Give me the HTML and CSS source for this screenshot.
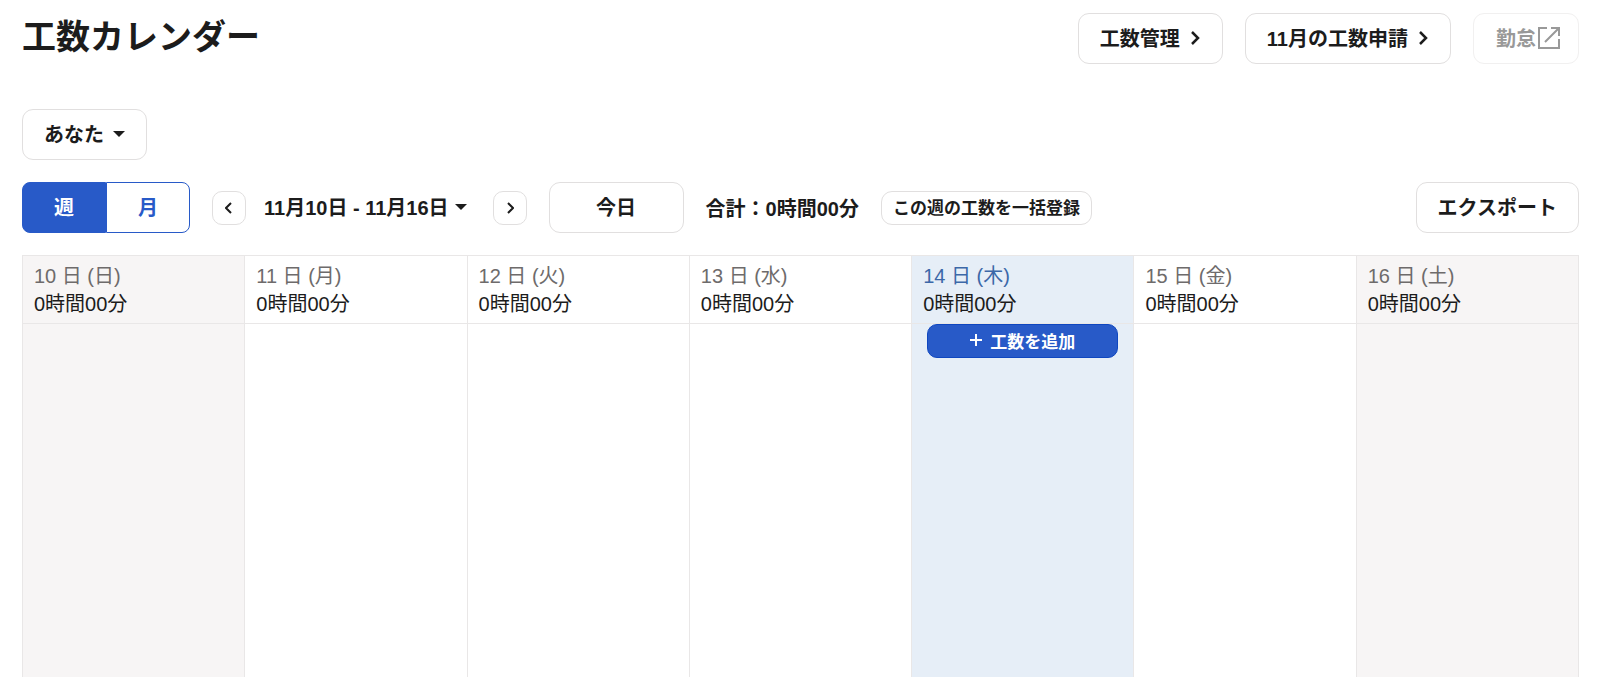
FILE: index.html
```html
<!DOCTYPE html>
<html lang="ja">
<head>
<meta charset="utf-8">
<meta name="viewport" content="width=device-width, initial-scale=1">
<title>工数カレンダー</title>
<link rel="stylesheet" href="styles.css">
</head>
<body>
<header class="page-header">
  <h1 class="title">工数カレンダー</h1>
  <nav class="header-actions">
    <button class="btn" type="button">工数管理<svg class="chevron" viewBox="0 0 10 16" aria-hidden="true"><path d="M1 2l6 6-6 6"/></svg></button>
    <button class="btn" type="button">11月の工数申請<svg class="chevron" viewBox="0 0 10 16" aria-hidden="true"><path d="M1 2l6 6-6 6"/></svg></button>
    <button class="btn btn-external" type="button" disabled>勤怠<svg class="external" viewBox="0 0 22 22" aria-hidden="true"><path d="M9 1H1v20h20v-9M13 1h8v8M21 1L7 15"/></svg></button>
  </nav>
</header>
<main class="content">
  <div class="filter">
    <button class="btn" type="button">あなた<svg class="caret" viewBox="0 0 12 6" aria-hidden="true"><path d="M0 0h12L6 6z"/></svg></button>
  </div>
  <div class="toolbar">
    <div class="toggle" role="group" aria-label="表示単位">
      <button class="toggle-item is-active" type="button" aria-pressed="true">週</button>
      <button class="toggle-item" type="button" aria-pressed="false">月</button>
    </div>
    <div class="range">
      <button class="btn-icon" type="button" aria-label="前の週"><svg class="arrow" viewBox="0 0 8 12" aria-hidden="true"><path d="M6 1L1 6l5 5"/></svg></button>
      <button class="range-label" type="button">11月10日 - 11月16日<svg class="caret" viewBox="0 0 12 6" aria-hidden="true"><path d="M0 0h12L6 6z"/></svg></button>
      <button class="btn-icon" type="button" aria-label="次の週"><svg class="arrow" viewBox="0 0 8 12" aria-hidden="true"><path d="M2 1l5 5-5 5"/></svg></button>
    </div>
    <button class="btn btn-today" type="button">今日</button>
    <p class="total">合計：0時間00分</p>
    <button class="btn btn-small" type="button">この週の工数を一括登録</button>
    <button class="btn btn-export" type="button">エクスポート</button>
  </div>
  <table class="calendar">
    <thead>
      <tr>
        <th class="weekend" scope="col"><span class="day">10 日 (日)</span><span class="hours">0時間00分</span></th>
        <th scope="col"><span class="day">11 日 (月)</span><span class="hours">0時間00分</span></th>
        <th scope="col"><span class="day">12 日 (火)</span><span class="hours">0時間00分</span></th>
        <th scope="col"><span class="day">13 日 (水)</span><span class="hours">0時間00分</span></th>
        <th class="today" scope="col"><span class="day">14 日 (木)</span><span class="hours">0時間00分</span></th>
        <th scope="col"><span class="day">15 日 (金)</span><span class="hours">0時間00分</span></th>
        <th class="weekend" scope="col"><span class="day">16 日 (土)</span><span class="hours">0時間00分</span></th>
      </tr>
    </thead>
    <tbody>
      <tr>
        <td class="weekend"></td>
        <td></td>
        <td></td>
        <td></td>
        <td class="today"><button class="btn-add" type="button"><svg class="plus" viewBox="0 0 12 12" aria-hidden="true"><path d="M6 0v12M0 6h12"/></svg>工数を追加</button></td>
        <td></td>
        <td class="weekend"></td>
      </tr>
    </tbody>
  </table>
</main>
</body>
</html>
```

FILE: styles.css
```css
* {
  box-sizing: border-box;
}

body {
  display: flex;
  flex-direction: column;
  height: 100vh;
  margin: 0;
  padding: 13px 21px 0 22px;
  overflow-x: hidden;
  background: #fff;
  color: #1c1c1c;
  font-family: "Liberation Sans", "Noto Sans CJK JP", sans-serif;
  font-size: 20px;
}

button {
  margin: 0;
  padding: 0;
  font: inherit;
  font-weight: 700;
  color: inherit;
  white-space: nowrap;
  cursor: pointer;
}

.page-header {
  display: flex;
  justify-content: space-between;
  align-items: flex-start;
  margin-bottom: 45px;
}

.title {
  margin: 0;
  font-size: 34px;
  font-weight: 700;
  line-height: 48px;
}

.header-actions {
  display: flex;
  gap: 22px;
}

.btn {
  display: inline-flex;
  align-items: center;
  justify-content: center;
  height: 51px;
  padding: 0 21px 2px;
  border: 1px solid #e1dfdf;
  border-radius: 11px;
  background: #fff;
}

.btn-external {
  padding: 0 18px 2px 22px;
  border-color: #f1f0f0;
  color: #999;
  cursor: default;
}

.chevron {
  width: 10px;
  height: 16px;
  margin-left: 11px;
  fill: none;
  stroke: currentColor;
  stroke-width: 2.5;
}

.external {
  width: 22px;
  height: 22px;
  margin-left: 2px;
  fill: none;
  stroke: currentColor;
  stroke-width: 2;
}

.caret {
  width: 12px;
  height: 6px;
  margin-left: 9px;
  fill: currentColor;
}

.content {
  display: flex;
  flex: 1;
  flex-direction: column;
  gap: 22px;
}

.filter {
  display: flex;
}

.toolbar {
  display: flex;
  align-items: center;
  gap: 22px;
}

.toggle {
  display: flex;
  height: 51px;
}

.toggle-item {
  width: 84px;
  padding-bottom: 2px;
  border: 1px solid #285ac8;
  border-radius: 0 8px 8px 0;
  background: #fff;
  color: #285ac8;
}

.toggle-item.is-active {
  border-radius: 8px 0 0 8px;
  background: #285ac8;
  color: #fff;
}

.range {
  display: flex;
  align-items: center;
}

.btn-icon {
  display: flex;
  align-items: center;
  justify-content: center;
  width: 34px;
  height: 34px;
  border: 1px solid #e1dfdf;
  border-radius: 10px;
  background: #fff;
}

.arrow {
  width: 8px;
  height: 12px;
  fill: none;
  stroke: currentColor;
  stroke-width: 2;
}

.range-label {
  display: flex;
  align-items: center;
  padding: 0 26px 2px 18px;
  border: 0;
  background: none;
}

.range-label .caret {
  margin-left: 6px;
}

.btn-today {
  width: 135px;
}

.total {
  margin: 0;
  font-weight: 700;
  white-space: nowrap;
}

.btn-small {
  height: 34px;
  padding: 0 11px 2px;
  font-size: 17px;
}

.btn-export {
  margin-left: auto;
}

.calendar {
  flex: 1;
  display: table;
  width: 100%;
  height: 100%;
  table-layout: fixed;
  border-collapse: collapse;
}

.calendar th,
.calendar td {
  border: 1px solid #e9e7e7;
  vertical-align: top;
}

.calendar th {
  height: 68px;
  padding: 6px 11px 5px;
  font-weight: 400;
  text-align: left;
}

.calendar td {
  padding: 0 15px;
  border-bottom: 0;
}

.calendar .weekend {
  background: #f7f5f5;
}

.calendar .today {
  background: #e6eef7;
}

.day,
.hours {
  display: block;
  line-height: 28px;
}

.day {
  color: #6e6b6b;
}

.today .day {
  color: #3c68a8;
}

.btn-add {
  display: flex;
  align-items: center;
  justify-content: center;
  gap: 8px;
  width: 100%;
  height: 34px;
  padding-bottom: 2px;
  border: 1px solid #0f47c0;
  border-radius: 10px;
  background: #285ac8;
  color: #fff;
  font-size: 17px;
}

.plus {
  width: 12px;
  height: 12px;
  fill: none;
  stroke: currentColor;
  stroke-width: 2;
}
```
